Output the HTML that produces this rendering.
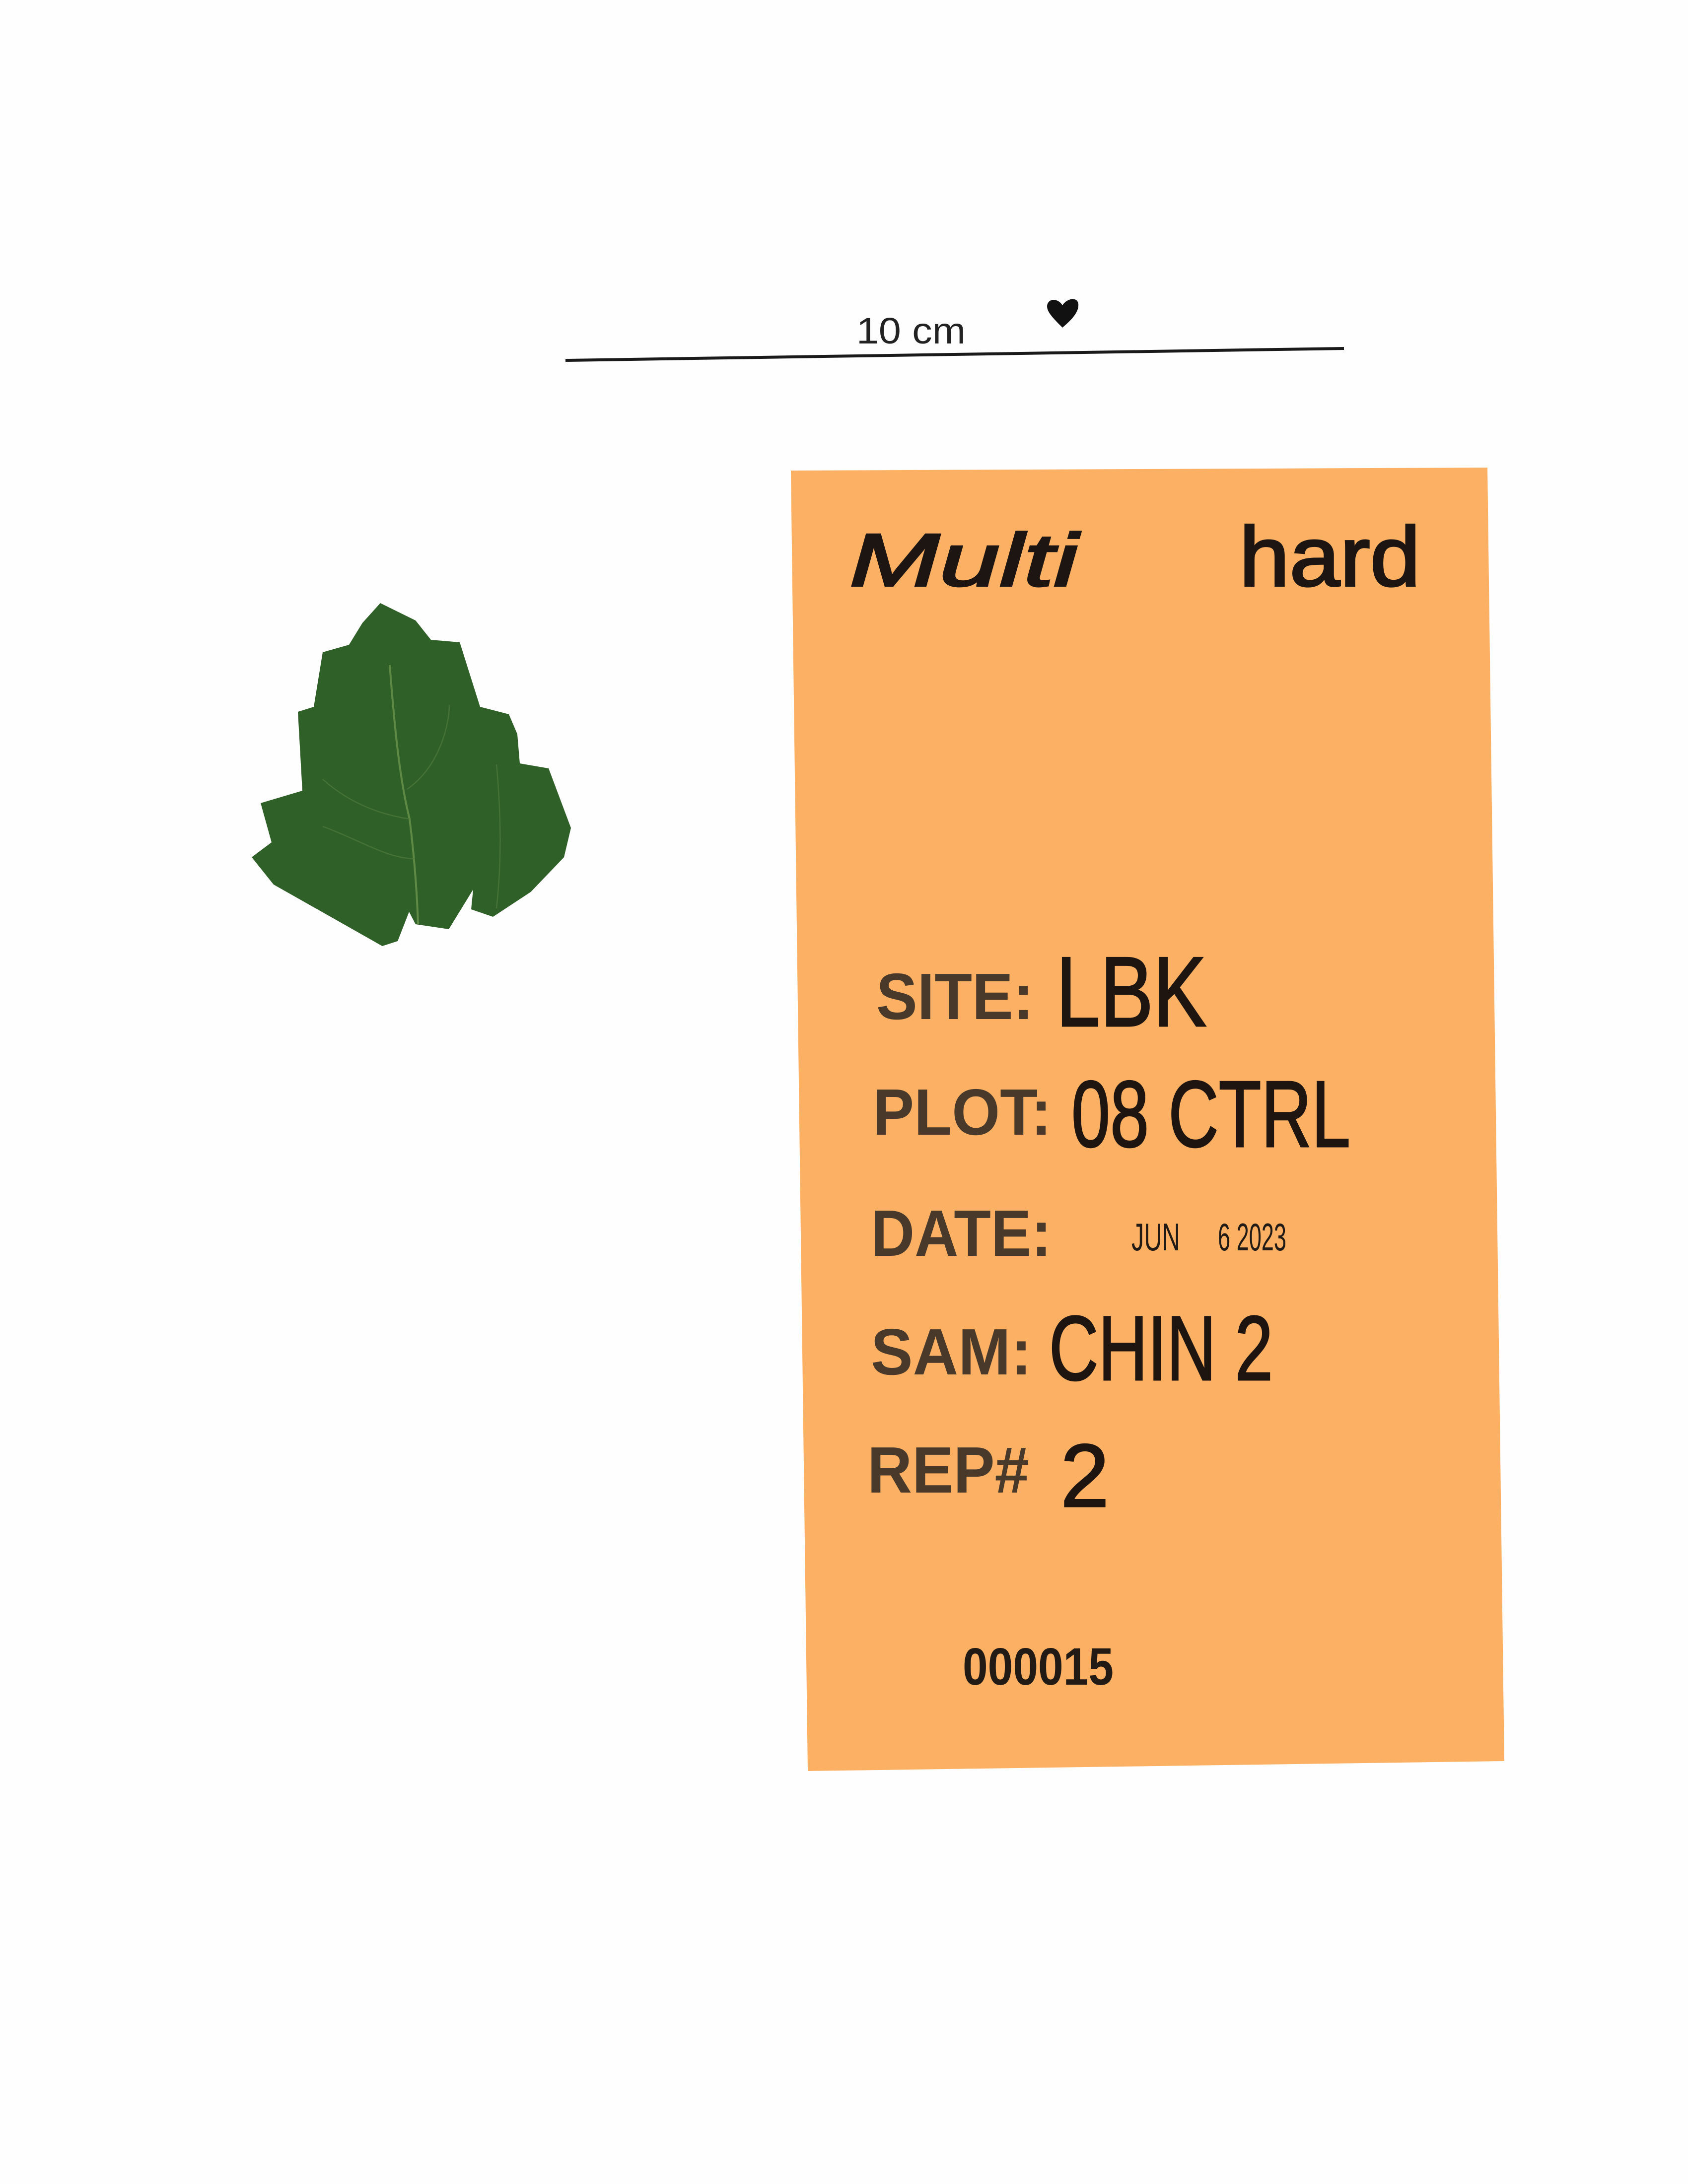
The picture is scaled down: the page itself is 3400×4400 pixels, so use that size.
<!DOCTYPE html>
<html><head><meta charset="utf-8"><style>
html,body{margin:0;padding:0;background:#fff;}
svg{display:block}
</style></head><body>
<svg width="3400" height="4400" viewBox="0 0 3400 4400" xmlns="http://www.w3.org/2000/svg">
<rect width="3400" height="4400" fill="#fefefe"/>
<line x1="1139" y1="726" x2="2707" y2="702" stroke="#1a1a1a" stroke-width="6"/>
<text x="1725" y="692" font-family="Liberation Sans, sans-serif" font-size="74" fill="#222" textLength="220" lengthAdjust="spacingAndGlyphs">10 cm</text>
<path d="M2140 660 C2120 640 2105 625 2110 612 C2115 600 2132 602 2140 615 C2150 600 2170 598 2172 612 C2174 628 2158 645 2140 660 Z" fill="#111"/>
<polygon fill="#2f6027" points="766,1215 837,1250 868,1289 926,1294 967,1424 1025,1439 1042,1479 1047,1538 1105,1548 1150,1668 1136,1727 1069,1797 993,1847 949,1832 953,1792 904,1872 837,1862 824,1837 801,1896 770,1906 551,1782 507,1727 547,1697 525,1618 609,1593 600,1434 632,1424 650,1314 703,1299 730,1255"/>
<path d="M785 1340 C795 1470 805 1570 825 1650 C835 1730 840 1800 842 1862" stroke="#5e8a45" stroke-width="4" fill="none"/>
<path d="M825 1650 C760 1640 700 1615 650 1570 M820 1590 C885 1545 905 1460 905 1420 M835 1730 C780 1730 720 1690 650 1665 M1000 1830 C1010 1740 1010 1650 1000 1540" stroke="#4f7a3d" stroke-width="2.5" fill="none" opacity="0.7"/>
<polygon fill="#fcb063" points="1593,948 2996,942 3030,3548 1627,3568"/>
<g fill="none" stroke="#1c1512" stroke-width="4" font-family="Liberation Sans, sans-serif">
<text x="1711" y="1180" font-size="150" font-style="italic" fill="#1c1512" textLength="460" lengthAdjust="spacingAndGlyphs">Multi</text>
<text x="2496" y="1180" font-size="170" fill="#1c1512" textLength="365" lengthAdjust="spacingAndGlyphs">hard</text>
</g>
<g fill="#3a2f26" font-family="Liberation Sans, sans-serif" font-weight="bold" font-size="132" opacity="0.92">
<text x="1765" y="2053" textLength="317" lengthAdjust="spacingAndGlyphs">SITE:</text>
<text x="1758" y="2286" textLength="360" lengthAdjust="spacingAndGlyphs">PLOT:</text>
<text x="1754" y="2530" textLength="364" lengthAdjust="spacingAndGlyphs">DATE:</text>
<text x="1754" y="2769" textLength="324" lengthAdjust="spacingAndGlyphs">SAM:</text>
<text x="1747" y="3007" textLength="326" lengthAdjust="spacingAndGlyphs">REP#</text>
</g>
<g fill="#1e1410" font-family="Liberation Sans, sans-serif" font-size="200" stroke="#1e1410" stroke-width="3">
<text x="2127" y="2067" textLength="303" lengthAdjust="spacingAndGlyphs">LBK</text>
<text x="2158" y="2310" font-size="190" textLength="562" lengthAdjust="spacingAndGlyphs">08 CTRL</text>
<text x="2113" y="2780" font-size="185" textLength="451" lengthAdjust="spacingAndGlyphs">CHIN 2</text>
<text x="2136" y="3035" font-size="180" textLength="98" lengthAdjust="spacingAndGlyphs">2</text>
</g>
<g fill="#221a14" font-family="Liberation Sans, sans-serif">
<text x="2279" y="2519" font-size="78" textLength="98" lengthAdjust="spacingAndGlyphs">JUN</text>
<text x="2453" y="2519" font-size="78" textLength="138" lengthAdjust="spacingAndGlyphs">6 2023</text>
<text x="1939" y="3394" font-size="106" font-weight="bold" textLength="304" lengthAdjust="spacingAndGlyphs">000015</text>
</g>
</svg>
</body></html>
